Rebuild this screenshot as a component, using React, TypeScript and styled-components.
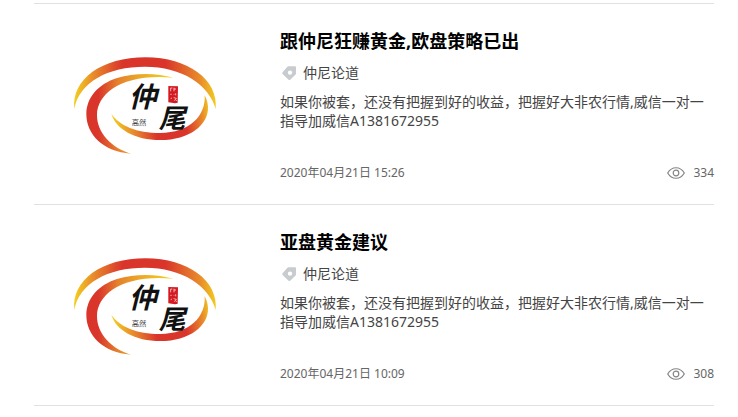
import React from "react";
import styled, { createGlobalStyle } from "styled-components";

const GlobalStyle = createGlobalStyle`
  * { box-sizing: border-box; }
  body {
    margin: 0;
    background: #fff;
    font-family: "Noto Sans", "Noto Sans CJK SC", sans-serif;
  }
`;

const List = styled.main`
  padding: 3px 24px 0 34px;
`;

const Item = styled.article`
  display: grid;
  grid-template-columns: 220px minmax(0, 1fr);
  column-gap: 26px;
  padding: 20px 0;
  border-top: 1px solid #e1e1e1;

  &:last-child {
    border-bottom: 1px solid #e1e1e1;
  }
`;

const Cover = styled.a`
  display: block;
  height: 160px;
`;

const LogoArt = styled.svg`
  display: block;
  width: 100%;
  height: 100%;
`;

const Body = styled.div`
  display: flex;
  flex-direction: column;
`;

const Title = styled.h2`
  margin: 4px 0 0;
  font-size: 18px;
  line-height: 26px;
  font-weight: 700;
  color: #000;
`;

const TitleLink = styled.a`
  color: inherit;
  text-decoration: none;
`;

const Author = styled.div`
  display: flex;
  align-items: center;
  gap: 6px;
  margin-top: 9px;
  padding-left: 2px;
  font-size: 14px;
  line-height: 20px;
  color: #444;
`;

const Summary = styled.p`
  margin: 9px 0 0;
  font-size: 14px;
  line-height: 19px;
  color: #444;
`;

const Meta = styled.footer`
  display: flex;
  justify-content: space-between;
  align-items: center;
  margin-top: auto;
  padding-bottom: 2px;
  font-size: 12px;
  line-height: 18px;
  color: #666;
`;

const Views = styled.span`
  display: flex;
  align-items: center;
  gap: 8px;
`;

const Icon = styled.svg`
  display: block;
  flex: none;
`;

function TagIcon() {
  return (
    <Icon width="15" height="15" viewBox="0 0 15 15" aria-hidden="true">
      <path
        fill="#c8cccf"
        fillRule="evenodd"
        d="M6.4.3H13q1 0 1 1v6.300q0 .6-.4 1L8.200 13.700q-.8.7-1.600 0L.6 7.900q-.7-.8 0-1.600L5.400.8Q5.900.3 6.400.3ZM8 4.400a2.200 2.200 0 1 0 0 4.400A2.200 2.200 0 0 0 8 4.400Z"
      />
    </Icon>
  );
}

function EyeIcon() {
  return (
    <Icon width="18" height="12" viewBox="0 0 18 12" fill="none" stroke="#858585" aria-hidden="true">
      <path d="M.7 6C4.800-1 13.200-1 17.300 6C13.200 13 4.800 13 .7 6Z" strokeWidth="1.200" />
      <circle cx="9" cy="6" r="2.800" strokeWidth="1.200" />
    </Icon>
  );
}

function Logo({ id }: { id: string }) {
  const outer = `${id}-outer`;
  const left = `${id}-left`;
  const lower = `${id}-lower`;
  return (
    <LogoArt viewBox="-78 -63 660 480" role="img" aria-label="仲尾">
      <defs>
        <linearGradient id={outer} gradientUnits="userSpaceOnUse" x1="42" y1="0" x2="470" y2="0">
          <stop offset="0" stopColor="#f3cf1f" />
          <stop offset="0.14" stopColor="#e88a2b" />
          <stop offset="0.34" stopColor="#d9352b" />
          <stop offset="0.64" stopColor="#d9352b" />
          <stop offset="0.88" stopColor="#e88a2b" />
          <stop offset="1" stopColor="#f3cf1f" />
        </linearGradient>
        <linearGradient id={left} gradientUnits="userSpaceOnUse" x1="85" y1="0" x2="330" y2="0">
          <stop offset="0" stopColor="#d9352b" />
          <stop offset="0.12" stopColor="#d9352b" />
          <stop offset="0.36" stopColor="#e5802d" />
          <stop offset="0.6" stopColor="#eaa428" />
          <stop offset="1" stopColor="#f3cf1f" />
        </linearGradient>
        <linearGradient id={lower} gradientUnits="userSpaceOnUse" x1="155" y1="210" x2="450" y2="165">
          <stop offset="0" stopColor="#f3cf1f" />
          <stop offset="0.22" stopColor="#e5802d" />
          <stop offset="0.42" stopColor="#d9352b" />
          <stop offset="0.72" stopColor="#d9352b" />
          <stop offset="0.9" stopColor="#e88a2b" />
          <stop offset="1" stopColor="#f3cf1f" />
        </linearGradient>
      </defs>
      <path
        fill={`url(#${outer})`}
        d="M43 192C34 102 126 37 257 37C384 37 476 105 467 192C448 119 365 65 255 65C143 65 57 112 43 192Z"
      />
      <path
        fill={`url(#${left})`}
        d="M340 98C292 84 226 82 171 99C115 117 79 158 79 207C79 268 129 320 213 326C154 309 111 263 111 211C111 143 190 84 340 98Z"
      />
      <path
        fill={`url(#${lower})`}
        d="M154 206C167 252 224 285 301 285C388 285 446 240 444 185C443 171 439 160 434 151C438 211 390 264 300 264C230 264 178 242 154 206Z"
      />
      <text x="206" y="187" fontSize="84" fontWeight="700" fontStyle="italic" fill="#111">仲</text>
      <text x="296" y="250" fontSize="80" fontWeight="700" fontStyle="italic" fill="#111">尾</text>
      <text x="215" y="240" fontSize="22" fill="#444">高然</text>
      <path fill="#d51920" d="M325 123L354 124L353 173L345 175L325 172Z" />
      <path
        fill="none"
        stroke="#fff"
        strokeWidth="2"
        d="M332 129V139M332 129H337M342 128V139M342 132H348M331 148H335M341 148H343M347 145V151M332 161L336 159M341 158L349 160L343 167M347 164L350 168"
      />
    </LogoArt>
  );
}

const posts = [
  { id: "p334", title: "跟仲尼狂赚黄金,欧盘策略已出", date: "2020年04月21日 15:26", views: 334 },
  { id: "p308", title: "亚盘黄金建议", date: "2020年04月21日 10:09", views: 308 },
];

export default function App() {
  return (
    <>
      <GlobalStyle />
      <List>
        {posts.map((post) => (
          <Item key={post.id}>
            <Cover href="#">
              <Logo id={post.id} />
            </Cover>
            <Body>
              <Title>
                <TitleLink href="#">{post.title}</TitleLink>
              </Title>
              <Author>
                <TagIcon />
                <span>仲尼论道</span>
              </Author>
              <Summary>
                如果你被套，还没有把握到好的收益，把握好大非农行情,威信一对一指导加威信A1381672955
              </Summary>
              <Meta>
                <time>{post.date}</time>
                <Views>
                  <EyeIcon />
                  {post.views}
                </Views>
              </Meta>
            </Body>
          </Item>
        ))}
      </List>
    </>
  );
}
